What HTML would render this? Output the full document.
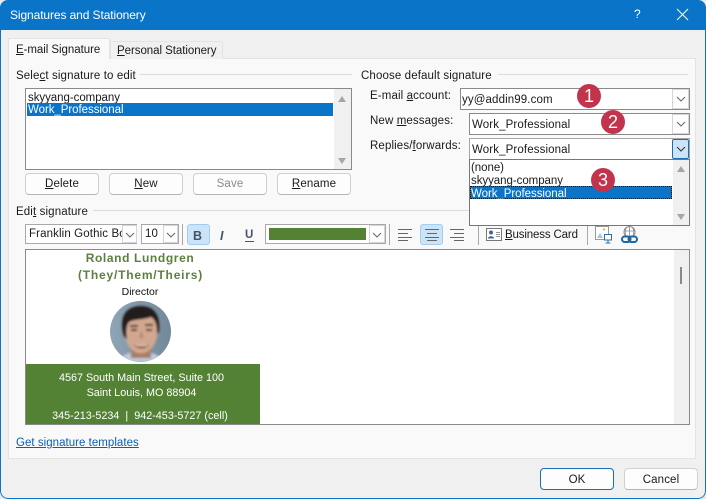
<!DOCTYPE html>
<html><head><meta charset="utf-8">
<style>
html,body{margin:0;padding:0;width:706px;height:499px;overflow:hidden;background:#e9e9e9;}
*{box-sizing:border-box;}
#w{position:absolute;left:0;top:0;width:706px;height:499px;background:#f0f0f0;border-radius:8px;overflow:hidden;font-family:"Liberation Sans",sans-serif;font-size:11.5px;color:#1a1a1a;}
#f{position:absolute;left:0;top:0;width:706px;height:499px;border:1.5px solid #0a74c8;border-top:0;border-radius:8px;}
.a{position:absolute;}
.t{position:absolute;white-space:nowrap;letter-spacing:.12px;line-height:14px;margin-top:1px;}
u{text-underline-offset:1px;}
.btn{position:absolute;height:22px;width:74px;background:#fdfdfd;border:1px solid #d0d0d0;border-bottom-color:#b5b5b5;border-radius:4px;text-align:center;line-height:21px;letter-spacing:.12px;}
.box{position:absolute;background:#fff;border:1px solid #8a8a8a;}
.dd{position:absolute;width:17px;background:#fdfdfd;border:1px solid #d5d5d5;}
.dd svg{position:absolute;left:3px;top:6px;}
.sb{position:absolute;background:#f0f0f0;}
.sep{position:absolute;width:1px;background:#a8a8a8;top:224px;height:21px;}
.line{position:absolute;height:1px;background:#dcdcdc;}
.badge{position:absolute;width:24px;height:24px;border-radius:50%;background:#c1344b;color:#fff;text-align:center;font-size:18px;line-height:24px;}
.up{position:absolute;width:0;height:0;border-left:4px solid transparent;border-right:4px solid transparent;border-bottom:6px solid #a6a6a6;}
.dn{position:absolute;width:0;height:0;border-left:4px solid transparent;border-right:4px solid transparent;border-top:6px solid #a6a6a6;}
.sig{position:absolute;left:26px;width:234px;text-align:center;white-space:nowrap;}
</style></head><body>
<div id="w">
<!-- title -->
<div class="a" style="left:0;top:0;width:706px;height:30px;background:#0a74c8;"></div>
<div class="t" style="left:10px;top:7px;color:#fff;font-size:12px;letter-spacing:-.1px;">Signatures and Stationery</div>
<div class="t" style="left:634px;top:6px;color:#fff;font-size:12px;">?</div>
<svg class="a" style="left:676px;top:8px" width="13" height="13"><path d="M1 1L12 12M12 1L1 12" stroke="#fff" stroke-width="1"/></svg>

<!-- panel -->
<div class="a" style="left:8px;top:58px;width:688px;height:401px;background:#f9f9f9;border:1px solid #e3e3e3;"></div>
<div class="a" style="left:110px;top:41px;width:113px;height:18px;background:#f0f0f0;border:1px solid #e3e3e3;border-bottom:0;"></div>
<div class="a" style="left:8px;top:38px;width:102px;height:21px;background:#f9f9f9;border:1px solid #e3e3e3;border-bottom:0;"></div>
<div class="t" style="left:16px;top:42px;letter-spacing:-.05px;"><u>E</u>-mail Signature</div>
<div class="t" style="left:117px;top:43px;letter-spacing:-.05px;"><u>P</u>ersonal Stationery</div>

<!-- left group -->
<div class="t" style="left:16px;top:68px;">Sele<u>c</u>t signature to edit</div>
<div class="line" style="left:140px;top:74px;width:212px;"></div>
<div class="box" style="left:25px;top:88px;width:327px;height:82px;"></div>
<div class="t" style="left:28px;top:90px;letter-spacing:-.05px;">skyyang-company</div>
<div class="a" style="left:27px;top:103px;width:306px;height:13px;background:#0a74c8;"></div>
<div class="t" style="left:28px;top:102px;color:#fff;letter-spacing:-.05px;">Work_Professional</div>
<div class="sb" style="left:334px;top:89px;width:17px;height:80px;"></div>
<div class="up" style="left:338px;top:96px;"></div>
<div class="dn" style="left:338px;top:158px;"></div>
<div class="btn" style="left:25px;top:173px;"><u>D</u>elete</div>
<div class="btn" style="left:109px;top:173px;"><u>N</u>ew</div>
<div class="btn" style="left:193px;top:173px;color:#8a8a8a;">Save</div>
<div class="btn" style="left:277px;top:173px;"><u>R</u>ename</div>

<!-- right group -->
<div class="t" style="left:361px;top:68px;">Choose default signature</div>
<div class="line" style="left:498px;top:74px;width:190px;"></div>
<div class="t" style="left:370px;top:88px;">E-mail <u>a</u>ccount:</div>
<div class="t" style="left:370px;top:113px;">New <u>m</u>essages:</div>
<div class="t" style="left:370px;top:138px;">Replies/<u>f</u>orwards:</div>

<div class="box" style="left:460px;top:88px;width:230px;height:22px;"></div>
<div class="t" style="left:462px;top:92px;">yy@addin99.com</div>
<div class="dd" style="left:672px;top:89px;height:20px;"><svg width="10" height="6"><path d="M1 1L5 5L9 1" fill="none" stroke="#666"/></svg></div>

<div class="box" style="left:469px;top:113px;width:221px;height:22px;"></div>
<div class="t" style="left:472px;top:117px;">Work_Professional</div>
<div class="dd" style="left:672px;top:114px;height:20px;"><svg width="10" height="6"><path d="M1 1L5 5L9 1" fill="none" stroke="#666"/></svg></div>

<div class="box" style="left:469px;top:138px;width:221px;height:22px;border-color:#a5a5a5;"></div>
<div class="t" style="left:472px;top:142px;">Work_Professional</div>
<div class="dd" style="left:672px;top:139px;height:20px;background:#cce4f7;border:1px solid #1a6fb5;border-radius:2px;"><svg width="10" height="6"><path d="M1 1L5 5L9 1" fill="none" stroke="#333"/></svg></div>

<!-- edit signature -->
<div class="t" style="left:16px;top:204px;">Edi<u>t</u> signature</div>
<div class="line" style="left:93px;top:210px;width:400px;"></div>

<div class="box" style="left:25px;top:224px;width:112px;height:20px;border-color:#a8a8a8;"></div>
<div class="t" style="left:29px;top:226px;width:93px;overflow:hidden;">Franklin Gothic Bo</div>
<div class="dd" style="left:122px;top:225px;height:18px;width:15px;"><svg width="10" height="6" style="left:2px;"><path d="M1 1L5 5L9 1" fill="none" stroke="#666"/></svg></div>
<div class="box" style="left:141px;top:224px;width:38px;height:20px;border-color:#a8a8a8;"></div>
<div class="t" style="left:145px;top:226px;">10</div>
<div class="dd" style="left:163px;top:225px;height:18px;width:15px;"><svg width="10" height="6" style="left:2px;"><path d="M1 1L5 5L9 1" fill="none" stroke="#666"/></svg></div>
<div class="sep" style="left:182px;"></div>
<div class="a" style="left:187px;top:224px;width:23px;height:21px;background:#cce4f7;border:1px solid #a3cdf0;border-radius:3px;"></div>
<div class="t" style="left:193px;top:228px;font-weight:bold;font-size:12.5px;color:#44546a;">B</div>
<div class="t" style="left:220px;top:228px;font-style:italic;font-weight:bold;font-size:12.5px;color:#44546a;">I</div>
<div class="t" style="left:245px;top:227px;font-weight:bold;font-size:11.5px;color:#44546a;">U</div>
<div class="a" style="left:245px;top:241px;width:9px;height:1px;background:#44546a;"></div>
<div class="a" style="left:265px;top:224px;width:121px;height:20px;background:#fff;border:1px solid #a8a8a8;"></div>
<div class="a" style="left:269px;top:228px;width:97px;height:12px;background:#548235;"></div>
<div class="dd" style="left:369px;top:225px;height:18px;width:16px;"><svg width="10" height="6" style="left:2px;"><path d="M1 1L5 5L9 1" fill="none" stroke="#666"/></svg></div>
<div class="sep" style="left:389px;"></div>
<svg class="a" style="left:397px;top:229px" width="16" height="12"><path d="M1 .5H15M1 4.5H11M1 8.5H15M1 11.5H11" stroke="#666" stroke-width="1"/></svg>
<div class="a" style="left:420px;top:224px;width:23px;height:21px;background:#cce4f7;border:1px solid #a3cdf0;border-radius:3px;"></div>
<svg class="a" style="left:424px;top:229px" width="16" height="12"><path d="M1 .5H15M3 4.5H13M1 8.5H15M3 11.5H13" stroke="#666" stroke-width="1"/></svg>
<svg class="a" style="left:449px;top:229px" width="16" height="12"><path d="M1 .5H15M5 4.5H15M1 8.5H15M5 11.5H15" stroke="#666" stroke-width="1"/></svg>
<div class="sep" style="left:478px;"></div>
<svg class="a" style="left:486px;top:228px" width="16" height="13"><rect x=".5" y=".5" width="15" height="12" fill="#fff" stroke="#777"/><circle cx="5" cy="4.500" r="2" fill="#44628f"/><path d="M2 10.500C2 7.500 8 7.500 8 10.500Z" fill="#44628f"/><path d="M10 4.500H14M10 6.500H14M10 8.500H14" stroke="#999"/></svg>
<div class="t" style="left:505px;top:227px;letter-spacing:-.15px;"><u>B</u>usiness Card</div>
<div class="sep" style="left:587px;"></div>
<svg class="a" style="left:595px;top:226px" width="17" height="18"><rect x=".5" y=".5" width="13" height="13" fill="#fff" stroke="#999"/><circle cx="9" cy="3.500" r="1.200" fill="#f0b27a"/><path d="M2 12L5 7L8 12Z" fill="#a9c4de"/><rect x="9.500" y="8.500" width="7" height="5.500" fill="#fff" stroke="#2f6ea5"/><path d="M13 14V16.500M10.500 17H15.500" stroke="#2f6ea5"/></svg>
<svg class="a" style="left:621px;top:226px" width="17" height="18"><circle cx="8.500" cy="6" r="5.500" fill="#fff" stroke="#8a8a8a"/><path d="M3 5H14M8.500 .5V10M5.500 1.500C4 4 4 7 5 10M11.500 1.500C13 4 13 7 12 10" stroke="#8a8a8a" fill="none" stroke-width=".8"/><rect x="1" y="10.500" width="8.500" height="5.500" rx="2.700" fill="none" stroke="#1f65a8" stroke-width="2"/><rect x="7.500" y="10.500" width="8.500" height="5.500" rx="2.700" fill="none" stroke="#1f65a8" stroke-width="2"/></svg>

<!-- editor -->
<div class="box" style="left:25px;top:249px;width:665px;height:176px;"></div>
<div class="sb" style="left:674px;top:250px;width:15px;height:174px;"></div>
<div class="a" style="left:680px;top:267px;width:2px;height:17px;background:#8a8a8a;"></div>
<div class="sig" style="left:23px;top:251px;line-height:14px;font-size:12px;font-weight:bold;color:#5c8040;letter-spacing:.62px;">Roland Lundgren</div>
<div class="sig" style="left:23.5px;top:268px;line-height:14px;font-size:12px;font-weight:bold;color:#5c8040;letter-spacing:.8px;">(They/Them/Theirs)</div>
<div class="sig" style="left:23px;top:285px;line-height:14px;font-size:10.500px;color:#111;">Director</div>
<svg class="a" style="left:110px;top:301px" width="61" height="61" viewBox="0 0 61 61">
<defs><clipPath id="c"><circle cx="30.500" cy="30.500" r="30.500"/></clipPath><filter id="b"><feGaussianBlur stdDeviation="1"/></filter><linearGradient id="g" x1="0" x2="1"><stop offset="0" stop-color="#8fa4b5"/><stop offset="1" stop-color="#728999"/></linearGradient></defs>
<g clip-path="url(#c)">
<rect width="61" height="61" fill="url(#g)"/>
<g filter="url(#b)">
<path d="M8 61C11 53 20 51 30 51C42 51 50 53 53 61Z" fill="#bccada"/>
<rect x="21" y="44" width="20" height="13" fill="#a87e68"/>
<ellipse cx="31" cy="30" rx="16.500" ry="22.500" fill="#d2a78f"/>
<path d="M13 32C9 13 18 5 31 5C44 5 51 14 49 31L47 33C47 25 46 19 41 16C33 19 24 18 19 21C16 25 16 32 17 38C15 37 14 35 13 32Z" fill="#221c1a"/>
<path d="M20 25H28M35 24H43" stroke="#3b2c26" stroke-width="2"/>
<path d="M21 29H27M36 29H42" stroke="#33241f" stroke-width="2"/>
<path d="M31 29L29 37H34Z" fill="#b78a73"/>
<path d="M23 43C27 46 36 46 40 43C36 49 27 49 23 43Z" fill="#8a4a42"/>
<path d="M26 44.500H37" stroke="#e9d7cc" stroke-width="1"/>
</g></g></svg>
<div class="a" style="left:26px;top:364px;width:234px;height:60px;background:#548235;"></div>
<div class="sig" style="left:24.5px;top:371px;line-height:14px;font-size:10.800px;color:#fff;">4567 South Main Street, Suite 100</div>
<div class="sig" style="left:24.5px;top:386px;line-height:14px;font-size:10.800px;color:#fff;">Saint Louis, MO 88904</div>
<div class="sig" style="left:23px;top:409px;line-height:14px;font-size:10.800px;color:#fff;">345-213-5234 &nbsp;|&nbsp; 942-453-5727 (cell)</div>

<div class="t" style="left:16px;top:435px;color:#0a5fb4;text-decoration:underline;letter-spacing:.03px;">Get signature templates</div>

<!-- dropdown -->
<div class="a" style="left:469px;top:159px;width:221px;height:67px;background:#fff;border:1px solid #777;"></div>
<div class="sb" style="left:673px;top:160px;width:16px;height:65px;"></div>
<div class="up" style="left:677px;top:166px;"></div>
<div class="dn" style="left:677px;top:214px;"></div>
<div class="t" style="left:471px;top:160px;letter-spacing:-.05px;">(none)</div>
<div class="t" style="left:471px;top:173px;letter-spacing:-.05px;">skyyang-company</div>
<div class="a" style="left:470px;top:186px;width:202px;height:13px;background:#0a74c8;border:1px dotted #111;"></div>
<div class="t" style="left:471px;top:186px;color:#fff;letter-spacing:-.05px;">Work_Professional</div>

<!-- badges -->
<div class="badge" style="left:577px;top:84px;">1</div>
<div class="badge" style="left:601px;top:110px;">2</div>
<div class="badge" style="left:591px;top:168px;">3</div>

<!-- footer -->
<div class="btn" style="left:540px;top:468px;border:1px solid #1a6fb5;line-height:22px;">OK</div>
<div class="btn" style="left:624px;top:468px;line-height:22px;">Cancel</div>
<div id="f"></div>
</div>
</body></html>
